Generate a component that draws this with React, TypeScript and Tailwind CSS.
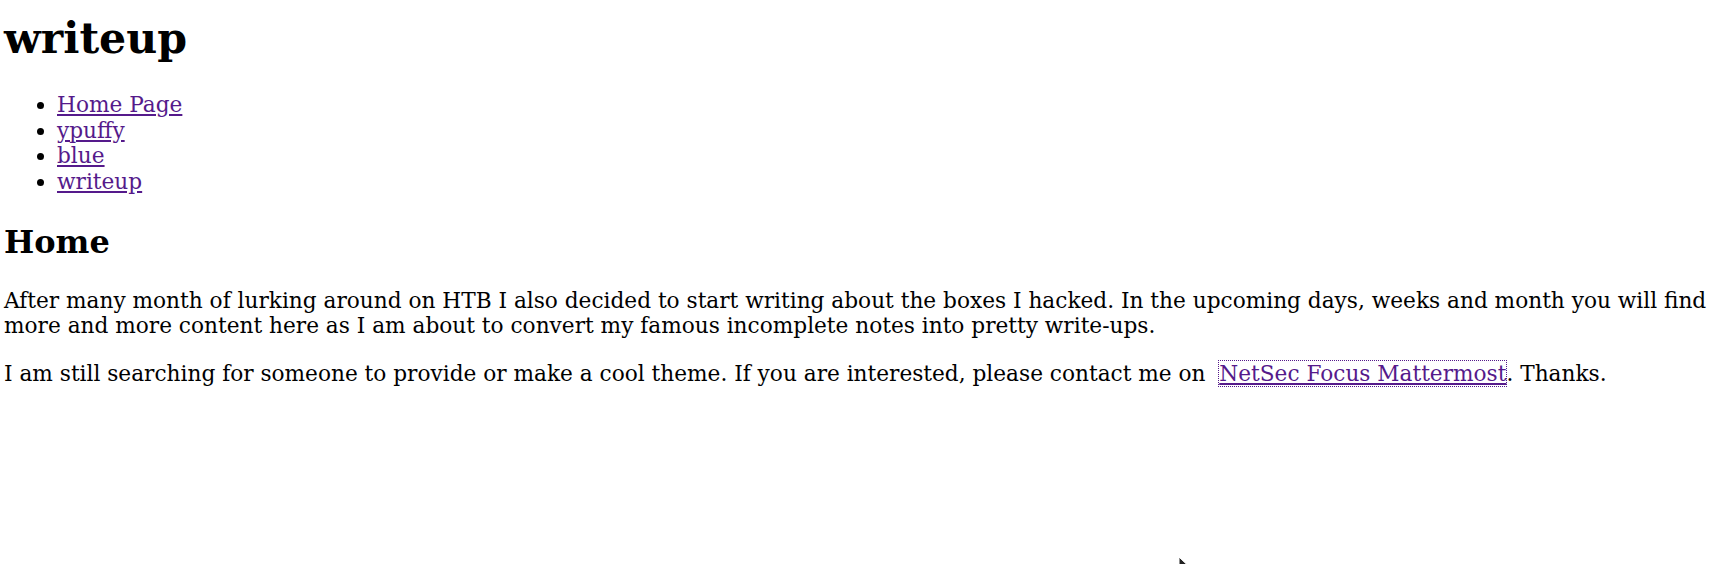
import React from "react";

export default function App() {
  return (
    <div
      className="relative h-[564px] w-[1727px] overflow-hidden bg-white pl-[4px] text-[21.67px] leading-[25.6px] text-black"
      style={{ fontFamily: '"DejaVu Serif", serif' }}
    >
      <h1 className="m-0 pt-[13px] text-[42.67px] font-bold leading-[50px]">writeup</h1>
      <ul className="mt-[29px] mb-0 list-disc pl-[53px]">
        <li><a href="#" className="text-[#551a8b] underline">Home Page</a></li>
        <li><a href="#" className="text-[#551a8b] underline">ypuffy</a></li>
        <li><a href="#" className="text-[#551a8b] underline">blue</a></li>
        <li><a href="#" className="text-[#551a8b] underline">writeup</a></li>
      </ul>
      <h2 className="mt-[30px] mb-0 text-[32px] font-bold leading-[37px]">Home</h2>
      <p className="mt-[26.5px] mb-0">
        After many month of lurking around on HTB I also decided to start writing about the boxes I hacked. In the upcoming days, weeks and month you will find more and more content here as I am about to convert my famous incomplete notes into pretty write-ups.
      </p>
      <p className="mt-[22px] mb-0">
        I am still searching for someone to provide or make a cool theme. If you are interested, please contact me on{"\u00a0 "}
        <a href="#" className="text-[#551a8b] underline outline outline-1 outline-dotted outline-[#551a8b]">NetSec Focus Mattermost</a>. Thanks.
      </p>
      <svg className="absolute left-[1178px] top-[556px]" width="12" height="18" viewBox="0 0 12 18">
        <path d="M1 1 L1 15 L4.5 11.5 L7 17 L9 16 L6.5 10.5 L11 10.5 Z" fill="#222" stroke="#fff" strokeWidth="1" />
      </svg>
    </div>
  );
}
